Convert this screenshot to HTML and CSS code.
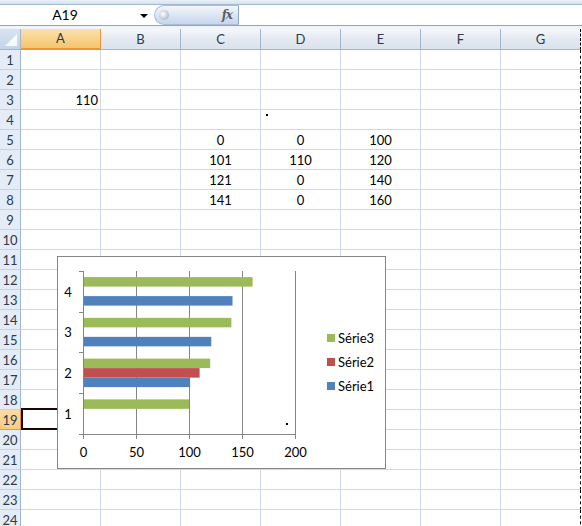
FILE: index.html
```html
<!DOCTYPE html>
<html>
<head>
<meta charset="utf-8">
<link rel="stylesheet" href="styles.css">
</head>
<body>
<div class="app">
  <div class="topband"></div>
  <div class="fbar">
    <div class="namebox"><span class="name">A19</span><span class="arrow"></span></div>
    <div class="pill"><span class="knob"></span><span class="fx">fx</span></div>
    <div class="finput"></div>
  </div>
  <div class="gap"></div>
  <div class="sheet">
    <div class="row hdr">
      <div class="corner"><svg width="20" height="20" viewBox="0 0 20 20"><polygon points="17,5 17,17 5,17" fill="#ffffff" opacity="0.85"/></svg></div>
      <div class="ch sel">A</div><div class="ch">B</div><div class="ch">C</div><div class="ch">D</div><div class="ch">E</div><div class="ch">F</div><div class="ch last">G</div>
    </div>
    <div class="row"><div class="rh">1</div><div class="c"></div><div class="c"></div><div class="c"></div><div class="c"></div><div class="c"></div><div class="c"></div><div class="c last"></div></div>
    <div class="row"><div class="rh">2</div><div class="c"></div><div class="c"></div><div class="c"></div><div class="c"></div><div class="c"></div><div class="c"></div><div class="c last"></div></div>
    <div class="row"><div class="rh">3</div><div class="c num">110</div><div class="c"></div><div class="c"></div><div class="c"></div><div class="c"></div><div class="c"></div><div class="c last"></div></div>
    <div class="row"><div class="rh">4</div><div class="c"></div><div class="c"></div><div class="c"></div><div class="c"><span class="dot"></span></div><div class="c"></div><div class="c"></div><div class="c last"></div></div>
    <div class="row"><div class="rh">5</div><div class="c"></div><div class="c"></div><div class="c mid">0</div><div class="c mid">0</div><div class="c mid">100</div><div class="c"></div><div class="c last"></div></div>
    <div class="row"><div class="rh">6</div><div class="c"></div><div class="c"></div><div class="c mid">101</div><div class="c mid">110</div><div class="c mid">120</div><div class="c"></div><div class="c last"></div></div>
    <div class="row"><div class="rh">7</div><div class="c"></div><div class="c"></div><div class="c mid">121</div><div class="c mid">0</div><div class="c mid">140</div><div class="c"></div><div class="c last"></div></div>
    <div class="row"><div class="rh">8</div><div class="c"></div><div class="c"></div><div class="c mid">141</div><div class="c mid">0</div><div class="c mid">160</div><div class="c"></div><div class="c last"></div></div>
    <div class="row"><div class="rh">9</div><div class="c"></div><div class="c"></div><div class="c"></div><div class="c"></div><div class="c"></div><div class="c"></div><div class="c last"></div></div>
    <div class="row"><div class="rh">10</div><div class="c"></div><div class="c"></div><div class="c"></div><div class="c"></div><div class="c"></div><div class="c"></div><div class="c last"></div></div>
    <div class="row"><div class="rh">11</div><div class="c"></div><div class="c"></div><div class="c"></div><div class="c"></div><div class="c"></div><div class="c"></div><div class="c last"></div></div>
    <div class="row"><div class="rh">12</div><div class="c"></div><div class="c"></div><div class="c"></div><div class="c"></div><div class="c"></div><div class="c"></div><div class="c last"></div></div>
    <div class="row"><div class="rh">13</div><div class="c"></div><div class="c"></div><div class="c"></div><div class="c"></div><div class="c"></div><div class="c"></div><div class="c last"></div></div>
    <div class="row"><div class="rh">14</div><div class="c"></div><div class="c"></div><div class="c"></div><div class="c"></div><div class="c"></div><div class="c"></div><div class="c last"></div></div>
    <div class="row"><div class="rh">15</div><div class="c"></div><div class="c"></div><div class="c"></div><div class="c"></div><div class="c"></div><div class="c"></div><div class="c last"></div></div>
    <div class="row"><div class="rh">16</div><div class="c"></div><div class="c"></div><div class="c"></div><div class="c"></div><div class="c"></div><div class="c"></div><div class="c last"></div></div>
    <div class="row"><div class="rh">17</div><div class="c"></div><div class="c"></div><div class="c"></div><div class="c"></div><div class="c"></div><div class="c"></div><div class="c last"></div></div>
    <div class="row"><div class="rh">18</div><div class="c"></div><div class="c"></div><div class="c"></div><div class="c"></div><div class="c"></div><div class="c"></div><div class="c last"></div></div>
    <div class="row"><div class="rh sel">19</div><div class="c"></div><div class="c"></div><div class="c"></div><div class="c"></div><div class="c"></div><div class="c"></div><div class="c last"></div></div>
    <div class="row"><div class="rh">20</div><div class="c"></div><div class="c"></div><div class="c"></div><div class="c"></div><div class="c"></div><div class="c"></div><div class="c last"></div></div>
    <div class="row"><div class="rh">21</div><div class="c"></div><div class="c"></div><div class="c"></div><div class="c"></div><div class="c"></div><div class="c"></div><div class="c last"></div></div>
    <div class="row"><div class="rh">22</div><div class="c"></div><div class="c"></div><div class="c"></div><div class="c"></div><div class="c"></div><div class="c"></div><div class="c last"></div></div>
    <div class="row"><div class="rh">23</div><div class="c"></div><div class="c"></div><div class="c"></div><div class="c"></div><div class="c"></div><div class="c"></div><div class="c last"></div></div>
    <div class="row"><div class="rh">24</div><div class="c"></div><div class="c"></div><div class="c"></div><div class="c"></div><div class="c"></div><div class="c"></div><div class="c last"></div></div>

    <div class="cursor"></div>

    <div class="chart">
      <svg class="plot" width="327" height="211" viewBox="0 0 327 211">
        <g stroke="#868686" stroke-width="1" fill="none">
          <line x1="78.5" y1="14" x2="78.5" y2="178"/>
          <line x1="131.5" y1="14" x2="131.5" y2="178"/>
          <line x1="184.5" y1="14" x2="184.5" y2="178"/>
          <line x1="237.5" y1="14" x2="237.5" y2="178"/>
        </g>
        <g>
          <rect x="25" y="20.1" width="169.6" height="9.5" fill="#9bbb59"/>
          <rect x="25" y="39.1" width="149.5" height="9.5" fill="#4f81bd"/>
          <rect x="25" y="60.85" width="148.4" height="9.5" fill="#9bbb59"/>
          <rect x="25" y="79.85" width="128.3" height="9.5" fill="#4f81bd"/>
          <rect x="25" y="101.6" width="127.2" height="9.5" fill="#9bbb59"/>
          <rect x="25" y="111.1" width="116.6" height="9.5" fill="#c0504d"/>
          <rect x="25" y="120.6" width="107.1" height="9.5" fill="#4f81bd"/>
          <rect x="25" y="142.35" width="106" height="9.5" fill="#9bbb59"/>
        </g>
        <g stroke="#868686" stroke-width="1" fill="none">
          <line x1="25.5" y1="14" x2="25.5" y2="178"/>
          <line x1="25" y1="177.5" x2="238" y2="177.5"/>
          <line x1="21" y1="14.5" x2="25" y2="14.5"/>
          <line x1="21" y1="55.5" x2="25" y2="55.5"/>
          <line x1="21" y1="95.5" x2="25" y2="95.5"/>
          <line x1="21" y1="136.5" x2="25" y2="136.5"/>
          <line x1="21" y1="177.5" x2="25" y2="177.5"/>
          <line x1="25.5" y1="178" x2="25.5" y2="182"/>
          <line x1="78.5" y1="178" x2="78.5" y2="182"/>
          <line x1="131.5" y1="178" x2="131.5" y2="182"/>
          <line x1="184.5" y1="178" x2="184.5" y2="182"/>
          <line x1="237.5" y1="178" x2="237.5" y2="182"/>
        </g>
        <g class="lbl" text-anchor="middle">
          <text x="10" y="39.5">4</text>
          <text x="10" y="79.5">3</text>
          <text x="10" y="120.5">2</text>
          <text x="10" y="161.5">1</text>
          <text x="25.5" y="199.5">0</text>
          <text x="78.5" y="199.5">50</text>
          <text x="131.5" y="199.5">100</text>
          <text x="184.5" y="199.5">150</text>
          <text x="237.5" y="199.5">200</text>
        </g>
        <rect x="228" y="166" width="2" height="2" fill="#000"/>
        <g class="lbl">
          <rect x="269" y="77" width="8" height="8" fill="#9bbb59"/>
          <text x="280" y="85.5">Série3</text>
          <rect x="269" y="101" width="8" height="8" fill="#c0504d"/>
          <text x="280" y="109.5">Série2</text>
          <rect x="269" y="125" width="8" height="8" fill="#4f81bd"/>
          <text x="280" y="133.5">Série1</text>
        </g>
      </svg>
    </div>
  </div>
</div>
</body>
</html>
```

FILE: styles.css
```css
html, body {
  margin: 0;
  padding: 0;
  background: #ffffff;
}
body {
  width: 582px;
  height: 526px;
  overflow: hidden;
  font-family: Lato, "Liberation Sans", sans-serif;
  font-size: 13px;
  color: #000;
}
.app {
  width: 582px;
}
.topband {
  height: 4px;
  background: linear-gradient(#e9f0f9, #d3e0f0);
  border-bottom: 1px solid #a7bad3;
}
.fbar {
  display: flex;
  height: 20px;
  background: #ffffff;
  border-bottom: 1px solid #8fa6c2;
}
.namebox {
  width: 154px;
  display: flex;
  align-items: center;
  position: relative;
}
.name {
  width: 130px;
  text-align: center;
  font-size: 14px;
  line-height: 20px;
}
.arrow {
  width: 0;
  height: 0;
  border-left: 4px solid transparent;
  border-right: 4px solid transparent;
  border-top: 4px solid #000;
  margin-left: 10px;
  margin-top: 1px;
}
.pill {
  width: 85px;
  box-sizing: border-box;
  height: 20px;
  border: 1px solid #a9bdd6;
  border-right: 1px solid #8ea4c0;
  border-radius: 10px 0 0 10px;
  background: linear-gradient(#f4f7fc, #dbe6f4 50%, #c6d6ee);
  display: flex;
  align-items: center;
  justify-content: space-between;
  padding: 0 6px 0 4px;
}
.knob {
  width: 10px;
  height: 10px;
  border-radius: 50%;
  background: radial-gradient(circle at 40% 40%, #ffffff, #b9c4d2 65%, #8f9cae);
}
.fx {
  font-family: "DejaVu Serif", "Liberation Serif", serif;
  font-style: italic;
  font-weight: bold;
  font-size: 12px;
  color: #5e5e5e;
  letter-spacing: -1px;
}
.finput {
  flex: 1;
  background: #fff;
}
.gap {
  height: 3px;
  background: #f1f4f9;
}
.sheet {
  position: relative;
}
.row {
  display: flex;
  height: 20px;
}
.row.hdr {
  height: 21px;
}
.corner {
  width: 21px;
  box-sizing: border-box;
  border-right: 1px solid #9eb6ce;
  border-bottom: 1px solid #9eb6ce;
  background: linear-gradient(#d9e4f2, #c3d3e8);
  line-height: 0;
}
.ch {
  width: 80px;
  box-sizing: border-box;
  border-right: 1px solid #9eb6ce;
  border-bottom: 1px solid #9eb6ce;
  background: linear-gradient(#f5f7fb, #e4e9f1 50%, #dae2ec);
  text-align: center;
  line-height: 20px;
  font-size: 13px;
  color: #2b3a4c;
}
.ch.sel {
  background: linear-gradient(#fbe2b2, #f8d38c 50%, #f4c56e);
  border-right: 1px solid #f29436;
  border-bottom: 2px solid #f29436;
  line-height: 19px;
}
.ch.last {
  border-right: 1px dashed #000;
}
.rh {
  width: 21px;
  box-sizing: border-box;
  background: #e4ecf7;
  border-right: 1px solid #9eb6ce;
  border-bottom: 1px solid #c5d3e4;
  text-align: center;
  line-height: 20px;
  font-size: 13px;
  color: #2b3a4c;
}
.rh.sel {
  background: linear-gradient(#fbdca5, #f8cd7f);
  border-right: 1px solid #f29436;
  border-bottom: 1px solid #f29436;
}
.c {
  width: 80px;
  box-sizing: border-box;
  border-right: 1px solid #d0d7e5;
  border-bottom: 1px solid #d0d7e5;
  line-height: 20px;
  font-size: 13px;
  position: relative;
}
.c.last {
  border-right: 1px dashed #000;
}
.c.num {
  text-align: right;
  padding-right: 2px;
}
.c.mid {
  text-align: center;
}
.dot {
  position: absolute;
  left: 5px;
  top: 4px;
  width: 2px;
  height: 2px;
  background: #000;
}
.cursor {
  position: absolute;
  left: 21px;
  top: 379px;
  width: 81px;
  height: 22px;
  box-sizing: border-box;
  border: 2px solid #1c0606;
}
.chart {
  position: absolute;
  left: 57px;
  top: 227px;
  width: 329px;
  height: 213px;
  box-sizing: border-box;
  border: 1px solid #868686;
  background: #ffffff;
}
.plot {
  display: block;
}
.lbl text {
  font-family: Lato, "Liberation Sans", sans-serif;
  font-size: 13px;
  fill: #000;
}
```
